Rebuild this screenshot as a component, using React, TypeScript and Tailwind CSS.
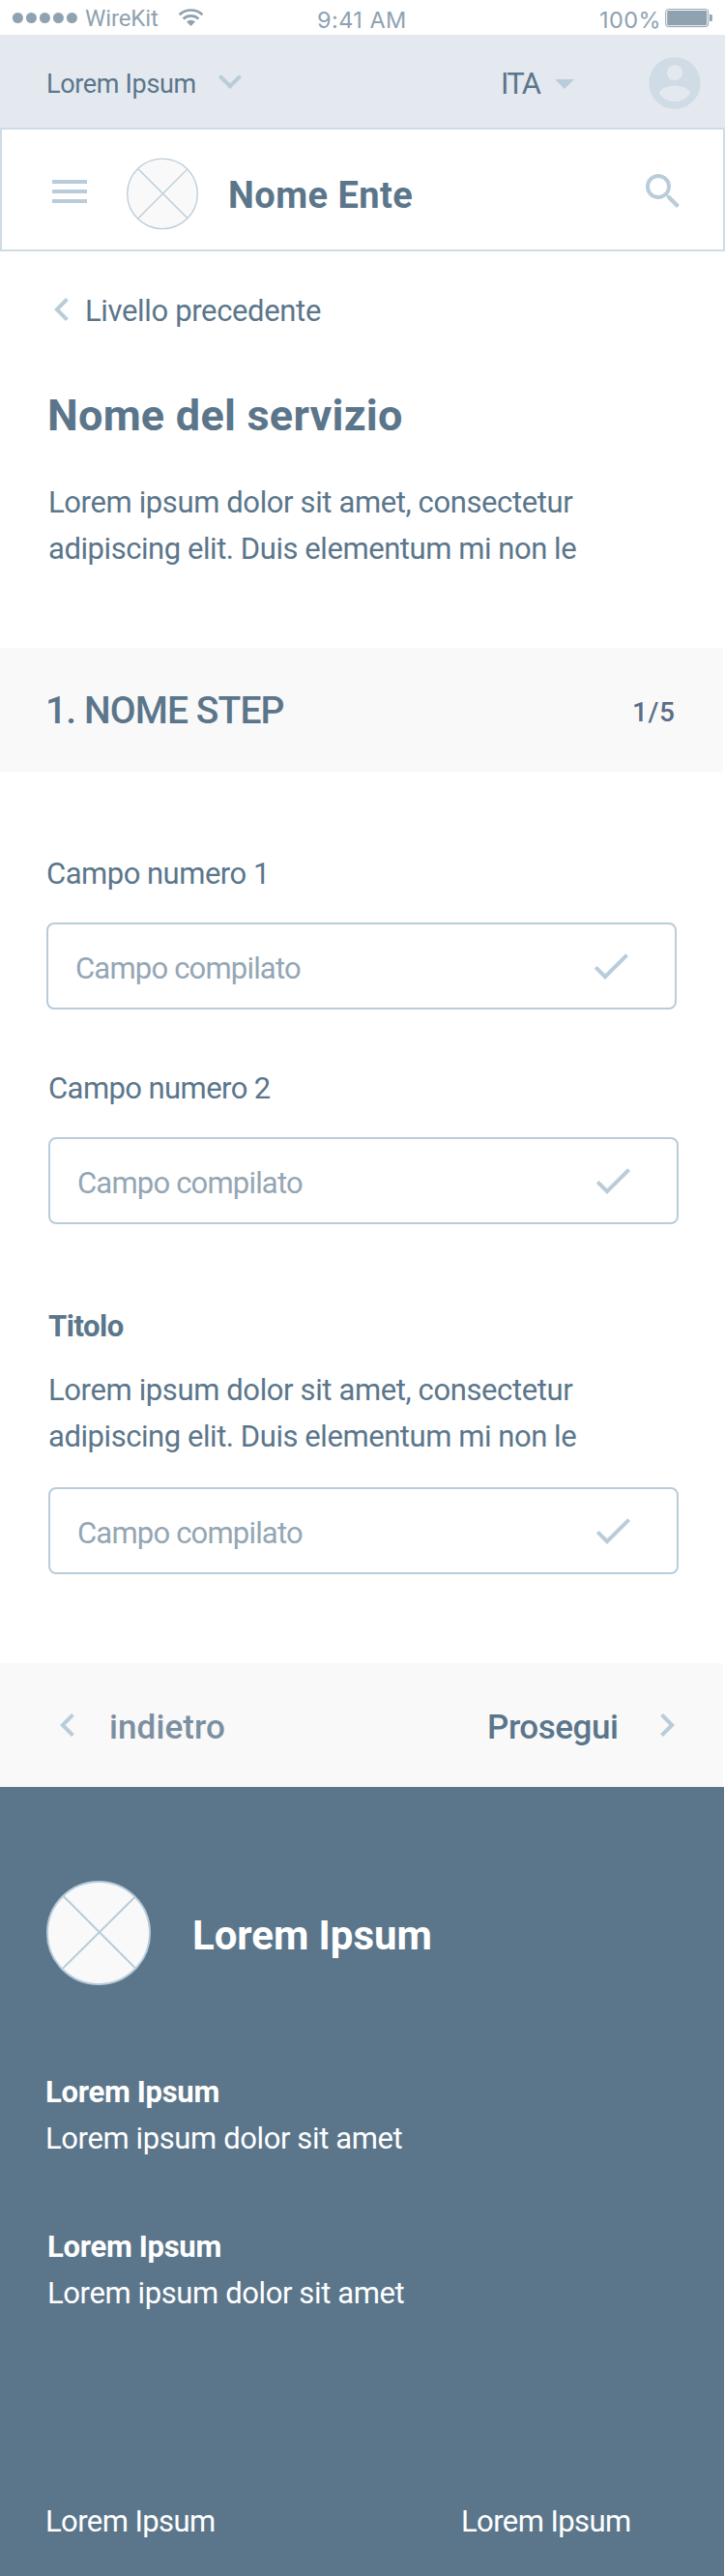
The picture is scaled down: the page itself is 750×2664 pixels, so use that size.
import type { ReactNode } from 'react';
import { MdArrowDropDown, MdCheck, MdChevronLeft, MdChevronRight, MdKeyboardArrowDown, MdSearch } from 'react-icons/md';

function StatusBar() {
  return (
    <div className="flex h-[36px] w-full items-start overflow-hidden bg-white text-[#8fa2b0]">
      <svg className="mt-[12px] ml-[12px] h-[13px] w-[70px] shrink-0" viewBox="0 0 70 13" fill="currentColor">
        <circle cx="6.4" cy="6.5" r="5.5" />
        <circle cx="20.4" cy="6.5" r="5.5" />
        <circle cx="34.4" cy="6.5" r="5.5" />
        <circle cx="48.4" cy="6.5" r="5.5" />
        <circle cx="62.4" cy="6.5" r="5.5" />
      </svg>
      <span className="mt-[5px] ml-[6px] w-[92px] shrink-0 text-[24px] leading-[28px] tracking-[-0.11px] whitespace-nowrap">WireKit</span>
      <svg className="mt-[8px] ml-[4px] h-[20px] w-[28px] shrink-0" viewBox="0 0 28 20" fill="none">
        <path d="M1.6 7.2a17.4 17.4 0 0 1 23.8 0" stroke="currentColor" strokeWidth="2.7" />
        <path d="M5.6 11.4a11.6 11.6 0 0 1 15.8 0" stroke="currentColor" strokeWidth="2.7" />
        <path d="M9 14.6a6.2 6.2 0 0 1 9 0L13.5 19z" fill="currentColor" />
      </svg>
      <span className="mt-[6px] ml-[116px] w-[120px] shrink-0 font-[Inter,sans-serif] text-[23.5px] leading-[29px] tracking-[0.43px] whitespace-nowrap">9:41 AM</span>
      <span className="mt-[6px] ml-[172px] w-[66px] shrink-0 font-[Inter,sans-serif] text-[23.5px] leading-[29px] tracking-[0.4px] whitespace-nowrap">100%</span>
      <svg className="mt-[9px] ml-[2px] h-[20px] w-[50px] shrink-0" viewBox="0 0 50 20" fill="none">
        <rect x="0.7" y="0.6" width="44" height="18" rx="2.6" stroke="currentColor" strokeWidth="1" />
        <rect x="2.2" y="2" width="41" height="15.2" rx="1" fill="currentColor" />
        <path d="M46 6h1.6q1.2 0 1.2 1.2v4.6q0 1.2-1.2 1.2H46z" fill="currentColor" />
      </svg>
    </div>
  );
}

function TopBar() {
  return (
    <div className="flex h-[96px] w-full items-start bg-[#e4e9f0]">
      <span className="mt-[35px] ml-[48px] w-[166px] shrink-0 text-[27px] leading-[32px] tracking-[-0.33px] whitespace-nowrap">Lorem Ipsum</span>
      <MdKeyboardArrowDown className="mt-[24px] size-[48px] shrink-0 text-[#b9ccda]" />
      <span className="mt-[32px] ml-[256px] w-[42px] shrink-0 text-[31px] leading-[37px] tracking-[-1.8px] whitespace-nowrap">ITA</span>
      <MdArrowDropDown className="mt-[26px] size-[48px] shrink-0 text-[#b9ccda]" />
      <svg className="mt-[18px] ml-[58px] size-[64px] shrink-0 text-[#cfdce5]" viewBox="0 0 24 24" fill="currentColor">
        <path d="M12 2C6.48 2 2 6.48 2 12s4.48 10 10 10 10-4.48 10-10S17.52 2 12 2zm0 3c1.66 0 3 1.34 3 3s-1.34 3-3 3-3-1.34-3-3 1.34-3 3-3zm0 14.2c-2.5 0-4.71-1.28-6-3.22.03-1.99 4-3.08 6-3.08 1.99 0 5.97 1.09 6 3.08-1.29 1.94-3.5 3.22-6 3.22z" />
      </svg>
    </div>
  );
}

function Header() {
  return (
    <header className="flex h-[128px] w-full items-start border-2 border-[#cfdce5] bg-white">
      <svg className="mt-[52px] ml-[52px] h-[24px] w-[36px] shrink-0" viewBox="0 0 36 24" fill="#b9ccda">
        <path d="M0 0h36v4H0zM0 10h36v4H0zM0 20h36v4H0z" />
      </svg>
      <svg className="mt-[28px] ml-[40px] size-[76px] shrink-0" viewBox="0 0 76 76" fill="none" stroke="#b9ccda" strokeWidth="1.3">
        <circle cx="38" cy="38.4" r="36.3" fill="#f9f9f9" />
        <path d="M13 12.8 64 63.8M63.4 13.4 13 63.8" />
      </svg>
      <h1 className="mt-[46px] ml-[30px] w-[221px] shrink-0 text-[38px] leading-[44px] font-bold tracking-[0.45px] whitespace-nowrap">Nome Ente</h1>
      <MdSearch className="mt-[40px] ml-[205px] size-[48px] shrink-0 text-[#b9ccda]" />
    </header>
  );
}

function Intro() {
  return (
    <section className="flex h-[410px] flex-col items-start">
      <div className="mt-[36px] flex items-start pl-[40px]">
        <MdChevronLeft className="size-[48px] shrink-0 text-[#b9ccda]" />
        <span className="mt-[7px] text-[31px] leading-[37px] tracking-[-0.35px] whitespace-nowrap">Livello precedente</span>
      </div>
      <h2 className="mt-[59px] ml-[49px] text-[45px] leading-[53px] font-bold tracking-[0.24px] whitespace-nowrap">Nome del servizio</h2>
      <Paragraph className="mt-[45px] ml-[50px]" />
    </section>
  );
}

function Paragraph({ className }: { className: string }) {
  return (
    <p className={`flex flex-col gap-[11px] text-[31px] leading-[37px] whitespace-nowrap ${className}`}>
      <span className="tracking-[-0.38px]">Lorem ipsum dolor sit amet, consectetur</span>
      <span className="tracking-[-0.44px]">adipiscing elit. Duis elementum mi non le</span>
    </p>
  );
}

function Label({ className, children }: { className: string; children: ReactNode }) {
  return <span className={`block text-[31px] leading-[37px] whitespace-nowrap ${className}`}>{children}</span>;
}

function Field({ className }: { className: string }) {
  return (
    <div className={`flex h-[90px] w-[652px] items-start justify-between rounded-[8px] border-2 border-[#b9ccda] bg-white ${className}`}>
      <span className="mt-[27px] ml-[28px] text-[31px] leading-[37px] tracking-[-0.81px] whitespace-nowrap text-[#94a6b4]">Campo compilato</span>
      <MdCheck className="mt-[19px] mr-[42px] size-[48px] shrink-0 text-[#b9ccda]" />
    </div>
  );
}

function Form() {
  return (
    <section className="flex h-[922px] flex-col items-start">
      <Label className="mt-[87px] ml-[48px] tracking-[-0.5px]">Campo numero 1</Label>
      <Field className="mt-[32px] ml-[48px]" />
      <Label className="mt-[63px] ml-[50px] tracking-[-0.58px]">Campo numero 2</Label>
      <Field className="mt-[32px] ml-[50px]" />
      <Label className="mt-[87px] ml-[50px] font-bold tracking-[-0.5px]">Titolo</Label>
      <Paragraph className="mt-[29px] ml-[50px]" />
      <Field className="mt-[34px] ml-[50px]" />
    </section>
  );
}

function Footer() {
  return (
    <footer className="flex h-[816px] w-[749px] flex-col items-start bg-[#5b768b] text-white">
      <div className="mt-[96px] ml-[47px] flex items-start">
        <svg className="size-[110px] shrink-0" viewBox="0 0 110 110" fill="none" stroke="#b9ccda" strokeWidth="2">
          <circle cx="55" cy="55" r="53" fill="#f9f9f9" />
          <path d="M18.4 16.8 92.6 91M92.4 18 18 91.6" />
        </svg>
        <span className="mt-[33px] ml-[42px] text-[42px] leading-[49px] font-bold tracking-[-0.05px] whitespace-nowrap">Lorem Ipsum</span>
      </div>
      <Label className="mt-[91px] ml-[47px] font-bold tracking-[-0.3px]">Lorem Ipsum</Label>
      <Label className="mt-[11px] ml-[47px] tracking-[-0.39px]">Lorem ipsum dolor sit amet</Label>
      <Label className="mt-[75px] ml-[49px] font-bold tracking-[-0.3px]">Lorem Ipsum</Label>
      <Label className="mt-[11px] ml-[49px] tracking-[-0.39px]">Lorem ipsum dolor sit amet</Label>
      <div className="mt-[199px] ml-[47px] flex">
        <Label className="w-[430px] tracking-[-0.58px]">Lorem Ipsum</Label>
        <Label className="tracking-[-0.58px]">Lorem Ipsum</Label>
      </div>
    </footer>
  );
}

export default function App() {
  return (
    <div className="flex h-[2664px] w-[750px] flex-col overflow-hidden bg-white font-[Roboto,sans-serif] font-normal text-[#5b768b]">
      <StatusBar />
      <TopBar />
      <Header />
      <Intro />
      <div className="flex h-[128px] w-[748px] items-start bg-[#f9f9f9]">
        <h3 className="mt-[42px] ml-[47px] w-[607px] text-[39px] leading-[46px] font-medium tracking-[-0.9px] whitespace-nowrap">1. NOME STEP</h3>
        <span className="mt-[50px] text-[28px] leading-[33px] font-medium tracking-[0.58px] whitespace-nowrap text-[#5a6e86]">1/5</span>
      </div>
      <Form />
      <nav className="flex h-[128px] w-[748px] items-start bg-[#f9f9f9] text-[35px] leading-[41px] font-medium">
        <MdChevronLeft className="mt-[40px] ml-[46px] size-[48px] shrink-0 text-[#b9ccda]" />
        <span className="mt-[46px] ml-[19px] w-[391px] shrink-0 tracking-[0.09px] whitespace-nowrap text-[#7c8fa1]">indietro</span>
        <span className="mt-[46px] w-[162px] shrink-0 tracking-[-0.46px] whitespace-nowrap">Prosegui</span>
        <MdChevronRight className="mt-[40px] size-[48px] shrink-0 text-[#b9ccda]" />
      </nav>
      <Footer />
    </div>
  );
}
